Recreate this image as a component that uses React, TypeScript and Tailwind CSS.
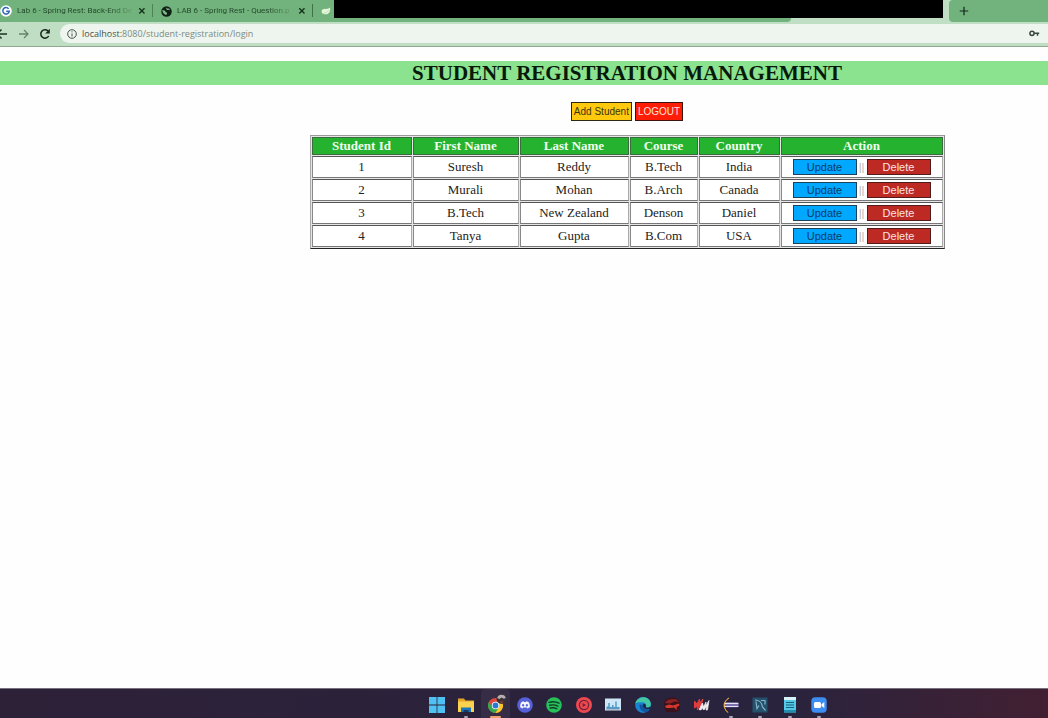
import type { ReactNode } from "react";

type Student = {
  id: number;
  firstName: string;
  lastName: string;
  course: string;
  country: string;
};

const students: Student[] = [
  { id: 1, firstName: "Suresh", lastName: "Reddy", course: "B.Tech", country: "India" },
  { id: 2, firstName: "Murali", lastName: "Mohan", course: "B.Arch", country: "Canada" },
  { id: 3, firstName: "B.Tech", lastName: "New Zealand", course: "Denson", country: "Daniel" },
  { id: 4, firstName: "Tanya", lastName: "Gupta", course: "B.Com", country: "USA" },
];

const columns = [
  { label: "Student Id", width: "w-[100px]" },
  { label: "First Name", width: "w-[106px]" },
  { label: "Last Name", width: "w-[109px]" },
  { label: "Course", width: "w-[68px]" },
  { label: "Country", width: "w-[81px]" },
  { label: "Action", width: "w-[162px]" },
];

const cell =
  "border border-t-[#555] border-l-[#888] border-r-[#aaa] border-b-[#777] bg-white p-0 text-center";

function CloseIcon() {
  return (
    <svg viewBox="0 0 8 8" className="size-2" stroke="#123018" strokeWidth="1.3">
      <path d="M1.3 1.3l5.2 5.2M6.5 1.3L1.3 6.5" />
    </svg>
  );
}

function Tab({ icon, title, className }: { icon: ReactNode; title: string; className: string }) {
  return (
    <div className={"flex h-full shrink-0 items-center " + className}>
      {icon}
      <span className="ml-[5px] flex-1 bg-linear-to-r from-[#204729] from-80% to-[#68a572] bg-clip-text font-['Roboto',sans-serif] text-[8px] leading-3 whitespace-nowrap text-transparent">
        {title}
      </span>
      <button type="button" aria-label="Close tab" className="ml-[6px]">
        <CloseIcon />
      </button>
    </div>
  );
}

function TabStrip() {
  return (
    <div className="flex h-[22px] bg-[#72b27c]">
      <Tab
        className="w-[146px]"
        title="Lab 6 - Spring Rest: Back-End De"
        icon={
          <svg viewBox="0 0 12 12" className="size-3 shrink-0">
            <circle cx="6" cy="6" r="5.8" fill="#fff" />
            <path d="M8.6 3.9A3.2 3.2 0 1 0 9.2 6.3H6.2" fill="none" stroke="#2f66b3" strokeWidth="1.5" />
          </svg>
        }
      />
      <div className="mx-[6px] mt-1 h-[13px] w-px shrink-0 bg-[#4d8256]" />
      <Tab
        className="ml-[2px] w-[145px]"
        title="LAB 6 - Spring Rest - Question.p"
        icon={
          <svg viewBox="0 0 12 12" className="size-[11px] shrink-0">
            <circle cx="6" cy="6" r="5.7" fill="#102217" />
            <path d="M1.4 4.4c1.2.5 2.8.2 3.2 1.2.4 1 .9 1.3 1.8 1.6.8.4-.1 1.8-.7 2.7-2-.6-4.3-2.6-4.3-5.5zM6.3 1.5c.2 1.1 1.1 1.5 2 1.2.9-.2 1.4.7 1.6 1.5-1.2-.2-2.4.6-3.4-.2-.8-.6-1.1-1.7-.2-2.5z" fill="#83bd8c" />
          </svg>
        }
      />
      <div className="mt-1 ml-[6px] h-[13px] w-px shrink-0 bg-[#3f7148]" />
      <div className="flex h-full w-[21px] shrink-0 items-center pl-2">
        <svg viewBox="0 0 10 8" className="h-2 w-[10px]">
          <path d="M9 .4C9.9 4.7 7.6 7.6 3.6 7.3 1.2 7.1.3 5.4.7 3.7 1.3 1.5 4.3 2 6.6 1.7 7.7 1.5 8.5 1.1 9 .4z" fill="#e4f5d8" />
          <path d="M1.6 6.4C4 6.3 6.6 5.2 8 3" fill="none" stroke="#a9d6a5" strokeWidth=".6" />
        </svg>
      </div>
      <div className="flex min-w-0 flex-1 flex-col bg-[#c0dec3]">
        <div className="h-[18px] bg-black" />
        <div className="h-1 w-3/4 rounded-br bg-[#72b27c]" />
      </div>
      <div className="w-[105px] shrink-0 bg-[#c0dec3] pl-[6px]">
        <div className="flex h-full items-center rounded-tl-sm rounded-bl bg-[#72b27c] pl-[10px]">
          <button type="button" aria-label="New tab">
            <svg viewBox="0 0 10 10" className="size-[10px]" stroke="#10291a" strokeWidth="1.2">
              <path d="M5 .8v8.4M.8 5h8.4" />
            </svg>
          </button>
        </div>
      </div>
    </div>
  );
}

function Toolbar() {
  return (
    <div className="flex h-[25px] items-center border-b border-[#8da791] bg-[#c0dec3] pb-px">
      <button type="button" aria-label="Back" className="w-[18px]">
        <svg viewBox="0 0 18 12" className="h-3 w-[18px]" fill="none" stroke="#1d3022" strokeWidth="1.5">
          <path d="M7 6H-3M1.5 1.5L-3 6l4.5 4.5" />
        </svg>
      </button>
      <button type="button" aria-label="Forward">
        <svg viewBox="0 0 12 12" className="size-3" fill="none" stroke="#648569" strokeWidth="1.3">
          <path d="M1 6h9M6 2l4 4-4 4" />
        </svg>
      </button>
      <button type="button" aria-label="Reload" className="ml-[9px]">
        <svg viewBox="0 0 12 12" className="size-3" fill="none" stroke="#17281b" strokeWidth="1.5">
          <path d="M9.7 8A4.2 4.2 0 1 1 9 3" />
          <path d="M10.8.8v4.6H6.2z" fill="#17281b" stroke="none" />
        </svg>
      </button>
      <div className="ml-[9px] flex h-[19px] flex-1 items-center rounded-l-full bg-[#edf5ee] pr-2 pl-[7px]">
        <svg viewBox="0 0 10 10" className="size-[10px]" fill="none" stroke="#455149" strokeWidth="1">
          <circle cx="5" cy="5" r="4.3" />
          <path d="M5 4.5v3M5 2.3v1.1" />
        </svg>
        <div className="ml-[5px] flex-1 text-[9px] leading-3 text-[#7e8980]">
          <span className="text-[#49534b]">localhost:</span>8080/student-registration/login
        </div>
        <svg viewBox="0 0 11 7" className="h-[7px] w-[11px]" fill="none" stroke="#38463c" strokeWidth="1.5">
          <circle cx="3" cy="3.3" r="2.1" />
          <path d="M5.2 3.3h5M8.5 3.3v2.4" />
        </svg>
      </div>
    </div>
  );
}

function StudentTable() {
  return (
    <table className="w-[635px] table-fixed border-separate border-spacing-px border border-t-[#999] border-r-[#888] border-b-[#222] border-l-[#aaa] bg-[#e6e6e6] font-['Liberation_Serif',serif] text-[13px] leading-4 text-[#222]">
      <thead>
        <tr className="h-[18px]">
          {columns.map((c) => (
            <th
              key={c.label}
              className={"border border-[#3c6b40] bg-[#25b32f] p-0 text-center font-bold text-[#effff0] " + c.width}
            >
              {c.label}
            </th>
          ))}
        </tr>
      </thead>
      <tbody>
        {students.map((s) => (
          <tr key={s.id} className="h-[22px]">
            <td className={cell}>{s.id}</td>
            <td className={cell}>{s.firstName}</td>
            <td className={cell}>{s.lastName}</td>
            <td className={cell}>{s.course}</td>
            <td className={cell}>{s.country}</td>
            <td className={cell}>
              <div className="flex items-center justify-center font-['Liberation_Sans',sans-serif] text-[11px] leading-3">
                <button type="button" className="h-4 w-16 border border-[#1b4259] bg-[#00a8ff] text-[#0b3c66]">
                  Update
                </button>
                <span className="w-[10px] text-center text-[#b4b4b4]">||</span>
                <button type="button" className="h-4 w-16 border border-[#521a18] bg-[#bd2a24] text-[#f9e4e2]">
                  Delete
                </button>
              </div>
            </td>
          </tr>
        ))}
      </tbody>
    </table>
  );
}

const taskIcons: { name: string; art: ReactNode; running?: boolean; active?: boolean }[] = [
  {
    name: "Start",
    art: <path d="M0 0h7.6v7.6H0zM8.4 0H16v7.6H8.4zM0 8.4h7.6V16H0zM8.4 8.4H16V16H8.4z" fill="#4fc1f2" />,
  },
  {
    name: "File Explorer",
    running: true,
    art: (
      <>
        <path d="M0 1.5h6l1.5 2H16V8H0z" fill="#e5a52b" />
        <path d="M0 4.5h16V15H0z" fill="#fbd150" />
        <path d="M3 10.500h10V15H3z" fill="#1b75b8" />
        <path d="M5.500 13h5v2h-5z" fill="#153d68" />
      </>
    ),
  },
  {
    name: "Chrome",
    active: true,
    art: (
      <>
        <circle cx="7.5" cy="8.5" r="7.5" fill="#e2483c" />
        <path d="M1 4.750A7.500 7.500 0 0 0 7.500 16l3.200-5.600H4.300z" fill="#37a852" />
        <path d="M7.500 16A7.500 7.500 0 0 0 14 4.750H7.500l3.300 5.600z" fill="#fbc926" />
        <circle cx="7.5" cy="8.5" r="3.7" fill="#fff" />
        <circle cx="7.5" cy="8.5" r="2.9" fill="#2878d4" />
        <circle cx="13.5" cy="2" r="5" fill="#393238" />
        <path d="M9.200 1a4.500 4.500 0 0 1 8.600 0l-2 .8-2.200-1.300L11.500 2z" fill="#b9afb1" />
        <path d="M11.500 4.500h4l-2 2z" fill="#963b3b" />
      </>
    ),
  },
  {
    name: "Discord",
    art: (
      <>
        <circle cx="8" cy="8" r="7.8" fill="#5660d8" />
        <path d="M4.5 5l2-.8.6.8h1.800l.6-.8 2 .8c1.200 1.800 1.500 3.500 1.300 5.300l-2.300 1.300-.8-1.200H6.300l-.8 1.200-2.300-1.300C3 8.500 3.300 6.800 4.500 5z" fill="#f3f3ff" />
        <ellipse cx="6.1" cy="8.3" rx="1" ry="1.2" fill="#5660d8" />
        <ellipse cx="9.9" cy="8.3" rx="1" ry="1.2" fill="#5660d8" />
      </>
    ),
  },
  {
    name: "Spotify",
    art: (
      <>
        <circle cx="8" cy="8" r="7.8" fill="#26c15a" />
        <path d="M3 5.300c3.500-1 7-.7 10 .9M3.700 8.300c3-.8 5.700-.5 8.200.8M4.200 11c2.500-.6 4.500-.4 6.600.7" fill="none" stroke="#123c27" strokeWidth="1.4" strokeLinecap="round" />
      </>
    ),
  },
  {
    name: "Music",
    art: (
      <>
        <circle cx="8" cy="8" r="8" fill="#ee4850" />
        <circle cx="8" cy="8" r="4.6" fill="none" stroke="#702235" strokeWidth="1.2" />
        <path d="M6.700 6L10 8l-3.300 2z" fill="#702235" />
      </>
    ),
  },
  {
    name: "Monitor",
    art: (
      <>
        <path d="M0 1.500h16v12H0z" fill="#cfe6f6" />
        <path d="M1.500 12V9.500h1.800V6h1.500v4H7V8h1.500v2h1.800V4.500h1.400V10h2.800v2z" fill="#4a9aca" />
        <path d="M1.500 11.500h13v1h-13z" fill="#8195a9" />
      </>
    ),
  },
  {
    name: "Edge",
    art: (
      <>
        <circle cx="8" cy="8" r="7.9" fill="#1783d1" />
        <path d="M.3 6.500C1.500 1.800 6-.6 10.500.5c3.700 1 5.500 4 5.400 6.700-.2 2.600-2.300 3.800-5 3.300 1.200-2.600-.6-5-3.300-5.200C4.500 5 1.800 5.300.3 6.500z" fill="#43c7a4" />
        <path d="M4.700 7.500c-.8 3.500 1.600 6.800 5 7.400 2 .2 3.700-.7 4.900-2.500-3.900 1.100-7.200-.5-6.800-4.300z" fill="#15529f" />
        <path d="M7.900 8c0-1 1.200-1.600 2.200-.9.900.7 1.100 2 .6 3.300 2 .5 3.800.1 5.200-1.200l-1 2.500c-3 1.500-7.200.3-7-3.700z" fill="#1d2442" />
      </>
    ),
  },
  {
    name: "Game",
    art: (
      <>
        <path d="M0 5l4-4 7-.5 5 3.500v9l-5 2H2L.5 11z" fill="#3a121c" />
        <path d="M.5 6l4-3.500 7-.5 4 3-5-.5-4.500 2z" fill="#8f2222" />
        <path d="M1 9l4-1.500 4 1 6-2 .5 2-3 1.500.5 3-3-2.500-4 .5L2 11z" fill="#d5382d" />
      </>
    ),
  },
  {
    name: "Media",
    art: (
      <>
        <path d="M.5 11V4L3 7l2.500-5 .5 4 3-4-2.500 8L5 9.500 3.500 13 3 9z" fill="#e23d3d" stroke="#e23d3d" />
        <path d="M5 12.500L8.500 6l1 4L12 5l-.5 4L15 3.500 13.500 13H12l.5-4-2 3.500H9l-.5-2L7 13z" fill="#f4eef0" stroke="#f4eef0" strokeWidth=".7" />
      </>
    ),
  },
  {
    name: "Eclipse",
    running: true,
    art: (
      <>
        <path d="M6 1C.5 4-.2 11.500 5 15.500-1 10 0 5 6 1z" fill="#dc9b38" stroke="#dc9b38" />
        <path d="M2 5.500h12l2 2.500-2 2.500H2z" fill="#574c91" />
        <path d="M1.500 6.500h14M1.500 9.300h14" stroke="#e7e4fa" strokeWidth="1.3" />
      </>
    ),
  },
  {
    name: "MySQL Workbench",
    running: true,
    art: (
      <>
        <path d="M.5.5h15v15H.5z" fill="#25516c" />
        <path d="M3 3c4 0 7 3 7.500 7l3 3.500M4 4.500l1 7 2-3M9 3.500h4v4" fill="none" stroke="#83b4c8" strokeWidth="1.2" />
      </>
    ),
  },
  {
    name: "Notepad",
    running: true,
    art: (
      <>
        <path d="M2 1h12v14.500H2z" fill="#53c9e6" />
        <path d="M2 0h12v3H2z" fill="#d9f2f7" />
        <path d="M4 5.500h8M4 8h8M4 10.500h8" stroke="#17607f" strokeWidth="1.2" />
        <path d="M2 13h12v2.500H2z" fill="#248cae" />
      </>
    ),
  },
  {
    name: "Zoom",
    running: true,
    art: (
      <>
        <rect x=".3" y=".3" width="15.4" height="15.4" rx="4" fill="#3d8df2" />
        <rect x="3" y="5" width="7" height="6" rx="1.5" fill="#fff" />
        <path d="M10.500 7.300L13.300 5v6l-2.800-2z" fill="#fff" />
      </>
    ),
  },
];

function Taskbar() {
  return (
    <footer className="flex h-[30px] shrink-0 justify-center border-t border-[#77717d] bg-linear-to-r from-[#2d2138] via-[#29233d] via-75% to-[#421f32] pl-[208px]">
      <div className="grid w-[412px] grid-cols-14">
        {taskIcons.map((icon) => (
          <button
            key={icon.name}
            type="button"
            aria-label={icon.name}
            className={"flex flex-col items-center justify-end " + (icon.active ? "rounded-t bg-white/5" : "")}
          >
            <svg viewBox="0 0 16 16" className="size-4 overflow-visible">
              {icon.art}
            </svg>
            <span
              className={
                "mt-[3px] h-[2px] rounded-full " +
                (icon.active ? "w-[11px] bg-[#f1a06d]" : icon.running ? "w-1 bg-[#a9a3b2]" : "w-1")
              }
            />
          </button>
        ))}
      </div>
    </footer>
  );
}

export default function App() {
  return (
    <div className="flex min-h-screen flex-col overflow-x-hidden bg-[#fdfefd] font-['Open_Sans','Noto_Sans',sans-serif]">
      <header>
        <TabStrip />
        <Toolbar />
      </header>
      <main className="flex-1 pt-[14px]">
        <h1 className="bg-[#8be28f] pl-[206px] text-center font-['Liberation_Serif',serif] text-[21px] leading-6 font-bold text-[#071a0a]">
          STUDENT REGISTRATION MANAGEMENT
        </h1>
        <div className="flex flex-col items-center pt-[17px] pl-[206px]">
          <div className="flex gap-[3px] font-['Liberation_Sans',sans-serif] text-[10px] leading-3">
            <button type="button" className="h-[19px] border border-[#2d2812] bg-[#ffc90e] px-[2px] text-[#3d3413]">
              Add Student
            </button>
            <button type="button" className="h-[19px] border border-[#3b1410] bg-[#ff1d05] px-[2px] text-[#ffe3dd]">
              LOGOUT
            </button>
          </div>
          <div className="mt-[14px]">
            <StudentTable />
          </div>
        </div>
      </main>
      <Taskbar />
    </div>
  );
}
